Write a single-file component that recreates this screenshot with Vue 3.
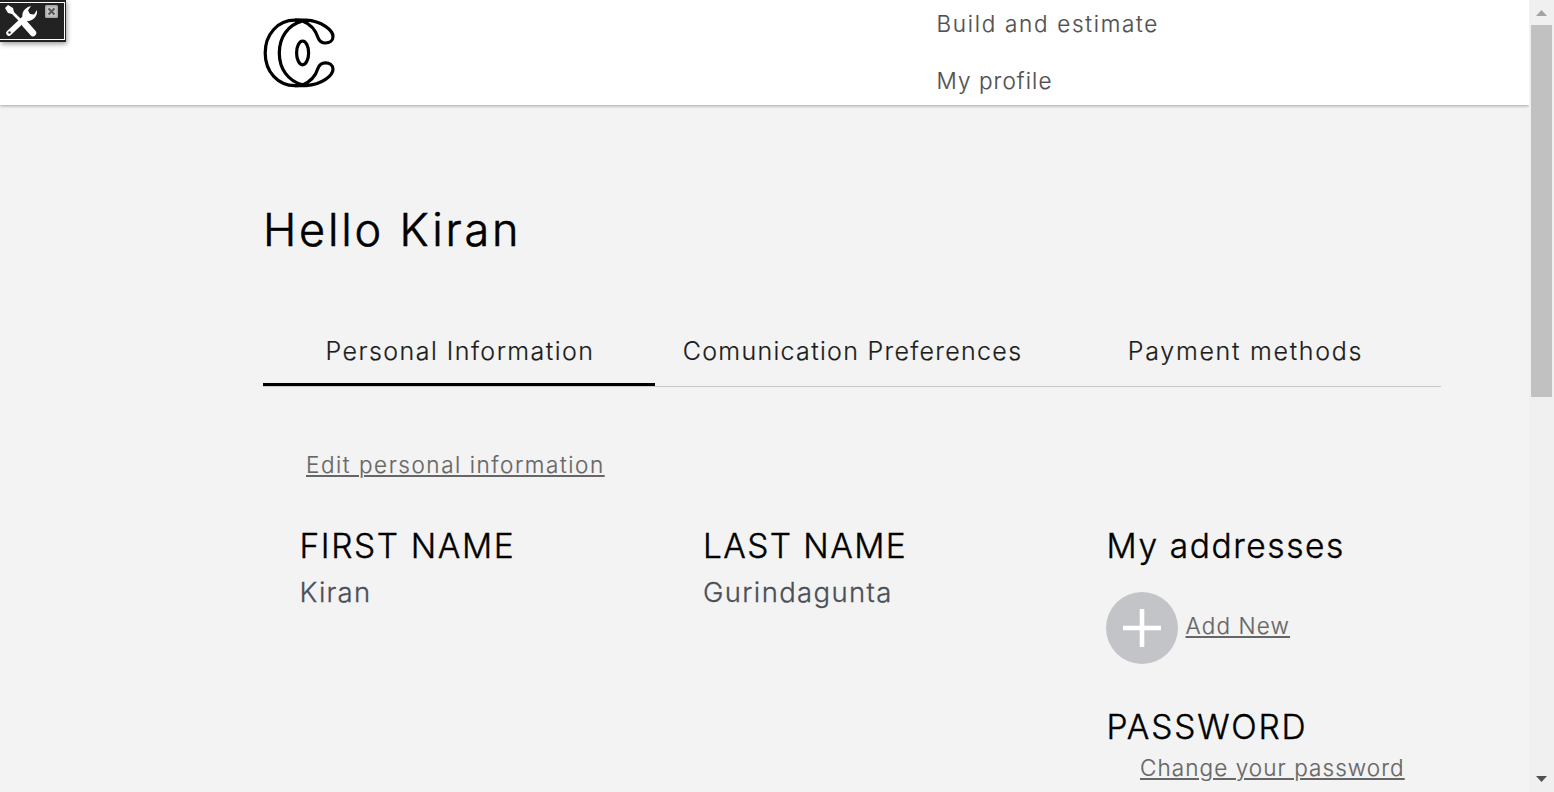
<script setup>
const tabs = [
  { id: 'personal', label: 'Personal Information', active: true },
  { id: 'communication', label: 'Comunication Preferences' },
  { id: 'payment', label: 'Payment methods' },
]
</script>

<template>
  <div class="window">
    <div class="page">
      <header class="header">
        <svg class="logo" viewBox="0 0 74 72" fill="none" stroke="#000" stroke-width="3.2">
          <path d="M40.600 3.600C37 3.100 35 3.200 33 3.200C16 3.200 3.200 17 3.200 35.900S16 68.600 33 68.600C35 68.600 37 68.700 40.600 68.200" />
          <path d="M33 3.200H44C60 4 71 13.500 71 19.500C71 23.500 67.500 26 63.500 26C59.500 26 57.200 24 56 20.500C53.500 12.500 48.500 7 40.600 3.900C26 8 17.300 20 17.300 35.900S26 63.800 40.600 67.900C48.500 64.800 53.500 59.300 56 51.300C57.200 47.800 59.500 45.800 63.500 45.800C67.500 45.800 71 48.300 71 52.300C71 58.300 60 67.800 44 68.600H33" />
          <ellipse cx="40.600" cy="35.900" rx="6" ry="11.900" />
        </svg>
        <nav class="nav">
          <a class="nav-link t-build">Build and estimate</a>
          <a class="nav-link t-profile">My profile</a>
        </nav>
      </header>

      <main class="content">
        <h1 class="greeting">Hello Kiran</h1>

        <div class="tabs">
          <div v-for="tab in tabs" :key="tab.id" class="tab" :class="[tab.id, { active: tab.active }]">
            {{ tab.label }}
          </div>
        </div>

        <a class="link edit">Edit personal information</a>

        <div class="columns">
          <section class="column">
            <h2 class="t-first">FIRST NAME</h2>
            <p class="value t-kiran">Kiran</p>
          </section>
          <section class="column">
            <h2 class="t-last">LAST NAME</h2>
            <p class="value t-surname">Gurindagunta</p>
          </section>
          <section class="column">
            <h2 class="t-addresses">My addresses</h2>
            <div class="add-row">
              <svg class="add-icon" viewBox="0 0 72 72">
                <circle cx="36" cy="36" r="36" fill="#c3c4c8" />
                <path d="M17 36H55M36 17V55" stroke="#fff" stroke-width="4.600" />
              </svg>
              <a class="link add">Add New</a>
            </div>
            <h2 class="t-password">PASSWORD</h2>
            <a class="link change">Change your password</a>
          </section>
        </div>
      </main>
    </div>

    <div class="scrollbar">
      <svg class="arrow" viewBox="0 0 11 6"><path d="M5.500 0L11 6H0Z" fill="#a3a3a3" /></svg>
      <div class="thumb"></div>
      <svg class="arrow down" viewBox="0 0 11 6"><path d="M0 0H11L5.500 6Z" fill="#505050" /></svg>
    </div>

    <div class="toolbox">
      <svg class="tools" viewBox="0 0 34 34">
        <g fill="#fff" stroke="#fff">
          <path d="M5 29L22 13" stroke-width="5.500" stroke-linecap="round" fill="none" />
          <path d="M21 17C16 13 18 4 27 2L24 6.500L26 10L30 10.500L33 6C34 13 28 18 21 17Z" stroke="none" />
          <path d="M1 4L4 1L9 4L10 8L19 17L17 19L8 10L4 9Z" stroke="none" />
          <path d="M21 20L29 29" stroke-width="6.500" stroke-linecap="round" fill="none" />
        </g>
        <circle cx="5.500" cy="28.500" r="1.200" fill="#222" />
      </svg>
      <svg class="close" viewBox="0 0 13 13">
        <rect width="13" height="13" rx="1.500" fill="#a8a8a8" />
        <rect x="1.500" y="1.500" width="10" height="10" fill="#c4c4c4" />
        <path d="M3.500 3.500L9.500 9.500M9.500 3.500L3.500 9.500" stroke="#555" stroke-width="1.800" />
      </svg>
    </div>
  </div>
</template>

<style>
body {
  margin: 0;
  background: #f3f3f3;
}
</style>

<style scoped>
.window {
  position: relative;
  display: flex;
  height: 792px;
  overflow: hidden;
  background: #f3f3f3;
  font-family: Inter, "Open Sans", sans-serif;
  font-weight: 300;
  -webkit-text-stroke-width: 0.2px;
}
.page {
  width: 1529px;
  overflow: hidden;
}
.header {
  display: flex;
  box-sizing: border-box;
  height: 105px;
  padding-left: 262px;
  background: #fff;
  box-shadow: 0 1px 3px rgba(0, 0, 0, 0.32);
}
.logo {
  width: 74px;
  height: 72px;
  margin-top: 17px;
}
.nav {
  display: flex;
  flex-direction: column;
  gap: 27px;
  margin: 9px 0 0 600.5px;
}
.nav-link {
  font-size: 22.5px;
  line-height: 30px;
  color: #505050;
}
.t-build { letter-spacing: 1.7px; }
.t-profile { letter-spacing: 1.1px; }
.content {
  width: 1178px;
  padding: 95px 0 0 263px;
}
h1,
h2,
p {
  margin: 0;
  font-weight: 300;
}
.greeting {
  font-size: 45px;
  line-height: 60px;
  letter-spacing: 2.8px;
  color: #000;
  -webkit-text-stroke-width: 0.6px;
}
.tabs {
  display: grid;
  grid-template-columns: 392px 1fr 1fr;
  margin-top: 75px;
  border-bottom: 1px solid #c8c8c8;
}
.tab {
  box-sizing: border-box;
  height: 51px;
  padding: 1px 0 0 2px;
  border-bottom: 3px solid transparent;
  font-size: 25px;
  line-height: 30px;
  text-align: center;
  color: #1c1c1c;
}
.tab.active { border-bottom-color: #000; }
.personal { letter-spacing: 1.46px; }
.communication { letter-spacing: 1.31px; }
.payment { letter-spacing: 1.71px; }
.link {
  font-size: 22.5px;
  line-height: 30px;
  color: #666;
  text-decoration: underline;
  text-decoration-thickness: 2px;
  text-underline-offset: 2px;
}
.edit {
  display: block;
  width: max-content;
  margin: 63px 0 0 43px;
  letter-spacing: 1.55px;
}
.columns {
  display: grid;
  grid-template-columns: repeat(3, 403.5px);
  margin: 43px 0 0 36.5px;
}
h2 {
  font-size: 33.5px;
  line-height: 46px;
  color: #000;
  -webkit-text-stroke-width: 0.4px;
}
.t-first { letter-spacing: 1.6px; }
.t-last { letter-spacing: 1.4px; }
.t-addresses { letter-spacing: 1.6px; }
.t-password { letter-spacing: 1.8px; }
.value {
  margin-top: 5px;
  font-size: 27.5px;
  line-height: 37px;
  color: #4a4f57;
  -webkit-text-stroke-width: 0.3px;
}
.t-kiran { letter-spacing: 1.2px; }
.t-surname { letter-spacing: 1.35px; }
.add-row {
  display: flex;
  align-items: center;
  gap: 7.5px;
  margin: 23px 0 40px -0.5px;
}
.add-icon {
  width: 72px;
  height: 72px;
}
.add {
  margin-bottom: 4px;
  letter-spacing: 1.15px;
}
.change {
  display: block;
  width: max-content;
  margin: 3px 0 0 33.5px;
  letter-spacing: 1.08px;
}
.scrollbar {
  display: flex;
  flex-direction: column;
  width: 25px;
  box-sizing: border-box;
  padding: 10px 2px;
  background: #f0f0f0;
}
.arrow {
  width: 11px;
  height: 6px;
  margin-left: 5px;
}
.thumb {
  height: 372px;
  margin-top: 9px;
  background: #c1c1c1;
}
.down { margin-top: auto; }
.toolbox {
  position: absolute;
  top: 0;
  left: 0;
  display: flex;
  justify-content: space-between;
  box-sizing: border-box;
  width: 66px;
  height: 42px;
  border: 1px solid #222;
  border-width: 2px 1px 2px 0;
  background: #222;
  box-shadow: inset -1px 0 #fff, inset 0 1px #fff, inset 0 -1px #fff, 1px 2px 5px rgba(0, 0, 0, 0.4);
}
.tools {
  width: 34px;
  height: 34px;
  margin: 2px 0 0 4px;
}
.close {
  width: 13px;
  height: 13px;
  margin: 3px 7px 0 0;
}
</style>
